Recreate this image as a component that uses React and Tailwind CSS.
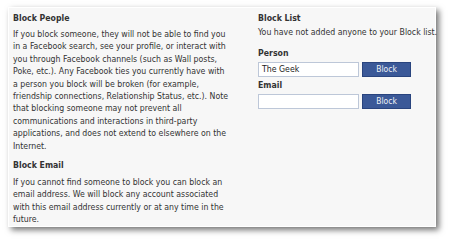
const peopleLines = [
  "If you block someone, they will not be able to find you",
  "in a Facebook search, see your profile, or interact with",
  "you through Facebook channels (such as Wall posts,",
  "Poke, etc.). Any Facebook ties you currently have with",
  "a person you block will be broken (for example,",
  "friendship connections, Relationship Status, etc.). Note",
  "that blocking someone may not prevent all",
  "communications and interactions in third-party",
  "applications, and does not extend to elsewhere on the",
  "Internet.",
]

const emailLines = [
  "If you cannot find someone to block you can block an",
  "email address. We will block any account associated",
  "with this email address currently or at any time in the",
  "future.",
]

function Lines({ lines }) {
  return (
    <div className="leading-[12.4px]">
      {lines.map((l, i) => (
        <div key={i} className="whitespace-nowrap">{l}</div>
      ))}
    </div>
  )
}

function BlockRow({ value }) {
  return (
    <div className="flex items-center gap-[3px]">
      <div className="w-[101px] h-[15px] bg-white border border-[#bdc7d8] pl-[3px] flex items-center text-[#222]">
        {value}
      </div>
      <button className="w-[49px] h-[15px] bg-[#3b5998] border border-[#29447e] text-[#f0f2f7] text-[8.5px] flex items-center justify-center">
        Block
      </button>
    </div>
  )
}

export default function App() {
  return (
    <div className="w-[450px] h-[242px] bg-white pt-[7px] pl-[8px]" style={{ fontFamily: '"DejaVu Sans Condensed", "Liberation Sans", sans-serif' }}>
      <div className="w-[428px] h-[220px] bg-[#f7f7f7] border border-white shadow-[3px_3px_6px_rgba(0,0,0,0.55)] flex text-[8.7px] text-[#333] pl-[4px] pt-[4px]">
        {/* left column */}
        <div className="w-[215px]">
          <h3 className="font-bold leading-[12px]">Block People</h3>
          <div className="mt-[4px]">
            <Lines lines={peopleLines} />
          </div>
          <h3 className="font-bold leading-[12px] mt-[7px]">Block Email</h3>
          <div className="mt-[5px]">
            <Lines lines={emailLines} />
          </div>
        </div>

        {/* right column */}
        <div className="ml-[30px]">
          <h3 className="font-bold leading-[12px]">Block List</h3>
          <div className="mt-[2px] leading-[12px] whitespace-nowrap">You have not added anyone to your Block list.</div>
          <div className="font-bold mt-[9px] leading-[12px]">Person</div>
          <div className="mt-[3px]">
            <BlockRow value="The Geek" />
          </div>
          <div className="font-bold leading-[12px] mt-[2px]">Email</div>
          <div className="mt-[3px]">
            <BlockRow value="" />
          </div>
        </div>
      </div>
    </div>
  )
}
